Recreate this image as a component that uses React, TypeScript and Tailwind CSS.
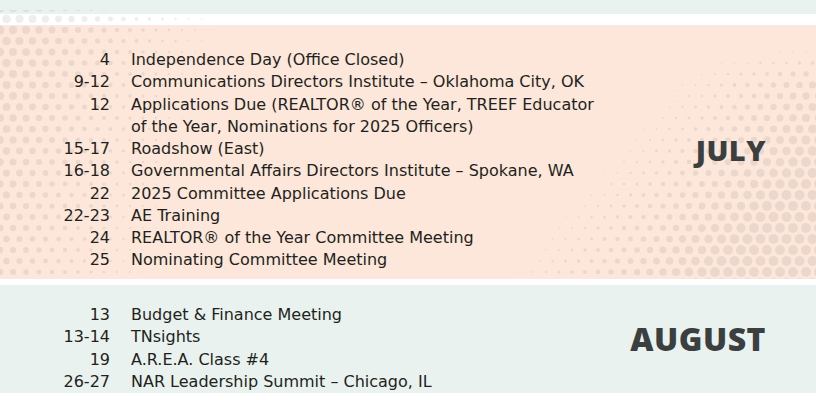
import React from "react";

const july = [
  { d: "4", t: "Independence Day (Office Closed)" },
  { d: "9-12", t: "Communications Directors Institute – Oklahoma City, OK" },
  { d: "12", t: "Applications Due (REALTOR® of the Year, TREEF Educator", t2: "of the Year, Nominations for 2025 Officers)" },
  { d: "15-17", t: "Roadshow (East)" },
  { d: "16-18", t: "Governmental Affairs Directors Institute – Spokane, WA" },
  { d: "22", t: "2025 Committee Applications Due" },
  { d: "22-23", t: "AE Training" },
  { d: "24", t: "REALTOR® of the Year Committee Meeting" },
  { d: "25", t: "Nominating Committee Meeting" },
];

const august = [
  { d: "13", t: "Budget & Finance Meeting" },
  { d: "13-14", t: "TNsights" },
  { d: "19", t: "A.R.E.A. Class #4" },
  { d: "26-27", t: "NAR Leadership Summit – Chicago, IL" },
];

// halftone dots, radius from two soft fields (top-left blob, bottom-right band)
const makeDots = () => {
  const dots: { x: number; y: number; r: number }[] = [];
  const step = 13;
  for (let row = 0; row * 11 < 290; row++) {
    const y = 8 + row * 11;
    const off = row % 2 ? step / 2 : 0;
    for (let x = off; x < 830; x += step) {
      const left = 4.5 - x / 55 - (y - 20) / 200;
      let right = (x - 700 + (y - 105) * 0.85) / 45 + 1.5;
      right = Math.min(5, right) * Math.max(0, Math.min(1, (y - 40) / 40));
      const r = Math.max(left, right);
      if (r > 0.6) dots.push({ x, y, r });
    }
  }
  return dots;
};
const dots = makeDots();

const EventList = ({ items }: { items: typeof july }) => (
  <div
    className="grid grid-cols-[110px_1fr] gap-x-[21px] leading-[22.25px] text-[16px] text-[#231f20]"
    style={{ fontFamily: '"DejaVu Sans", "Open Sans", sans-serif' }}
  >
    {items.map((e, i) => (
      <React.Fragment key={i}>
        <div className="text-right">{e.d}</div>
        <div>
          {e.t}
          {e.t2 && (
            <>
              <br />
              {e.t2}
            </>
          )}
        </div>
      </React.Fragment>
    ))}
  </div>
);

export default function App() {
  return (
    <div
      className="relative w-[816px] h-[400px] overflow-hidden bg-white"
      style={{ fontFamily: '"Open Sans", "Liberation Sans", sans-serif' }}
    >
      <div className="h-[14px] bg-[#e9f2ef]" />
      <div className="h-[11px] bg-white" />
      <div className="h-[254px] bg-[#fce7da] flex items-center justify-between pr-[50px]">
        <div className="self-start pt-[24px] relative z-10">
          <EventList items={july} />
        </div>
        <div className="relative z-10 mb-[5px] text-[29px] font-extrabold text-[#3b3f3f] tracking-[0.5px]">JULY</div>
      </div>
      <div className="h-[6px] bg-white" />
      <div className="h-[108px] bg-[#e9f2ef] flex items-center justify-between pr-[50px]">
        <div className="self-start pt-[19px]">
          <EventList items={august} />
        </div>
        <div className="text-[32px] font-extrabold text-[#3b3f3f] tracking-[0.5px]">AUGUST</div>
      </div>

      {/* decorative halftone overlay */}
      <svg className="absolute left-0 top-[10px] pointer-events-none" width="816" height="269" viewBox="0 10 816 269">
        {dots.map((p, i) => (
          <circle key={i} cx={p.x} cy={p.y} r={p.r} fill="#000" fillOpacity={0.065} />
        ))}
      </svg>
    </div>
  );
}
